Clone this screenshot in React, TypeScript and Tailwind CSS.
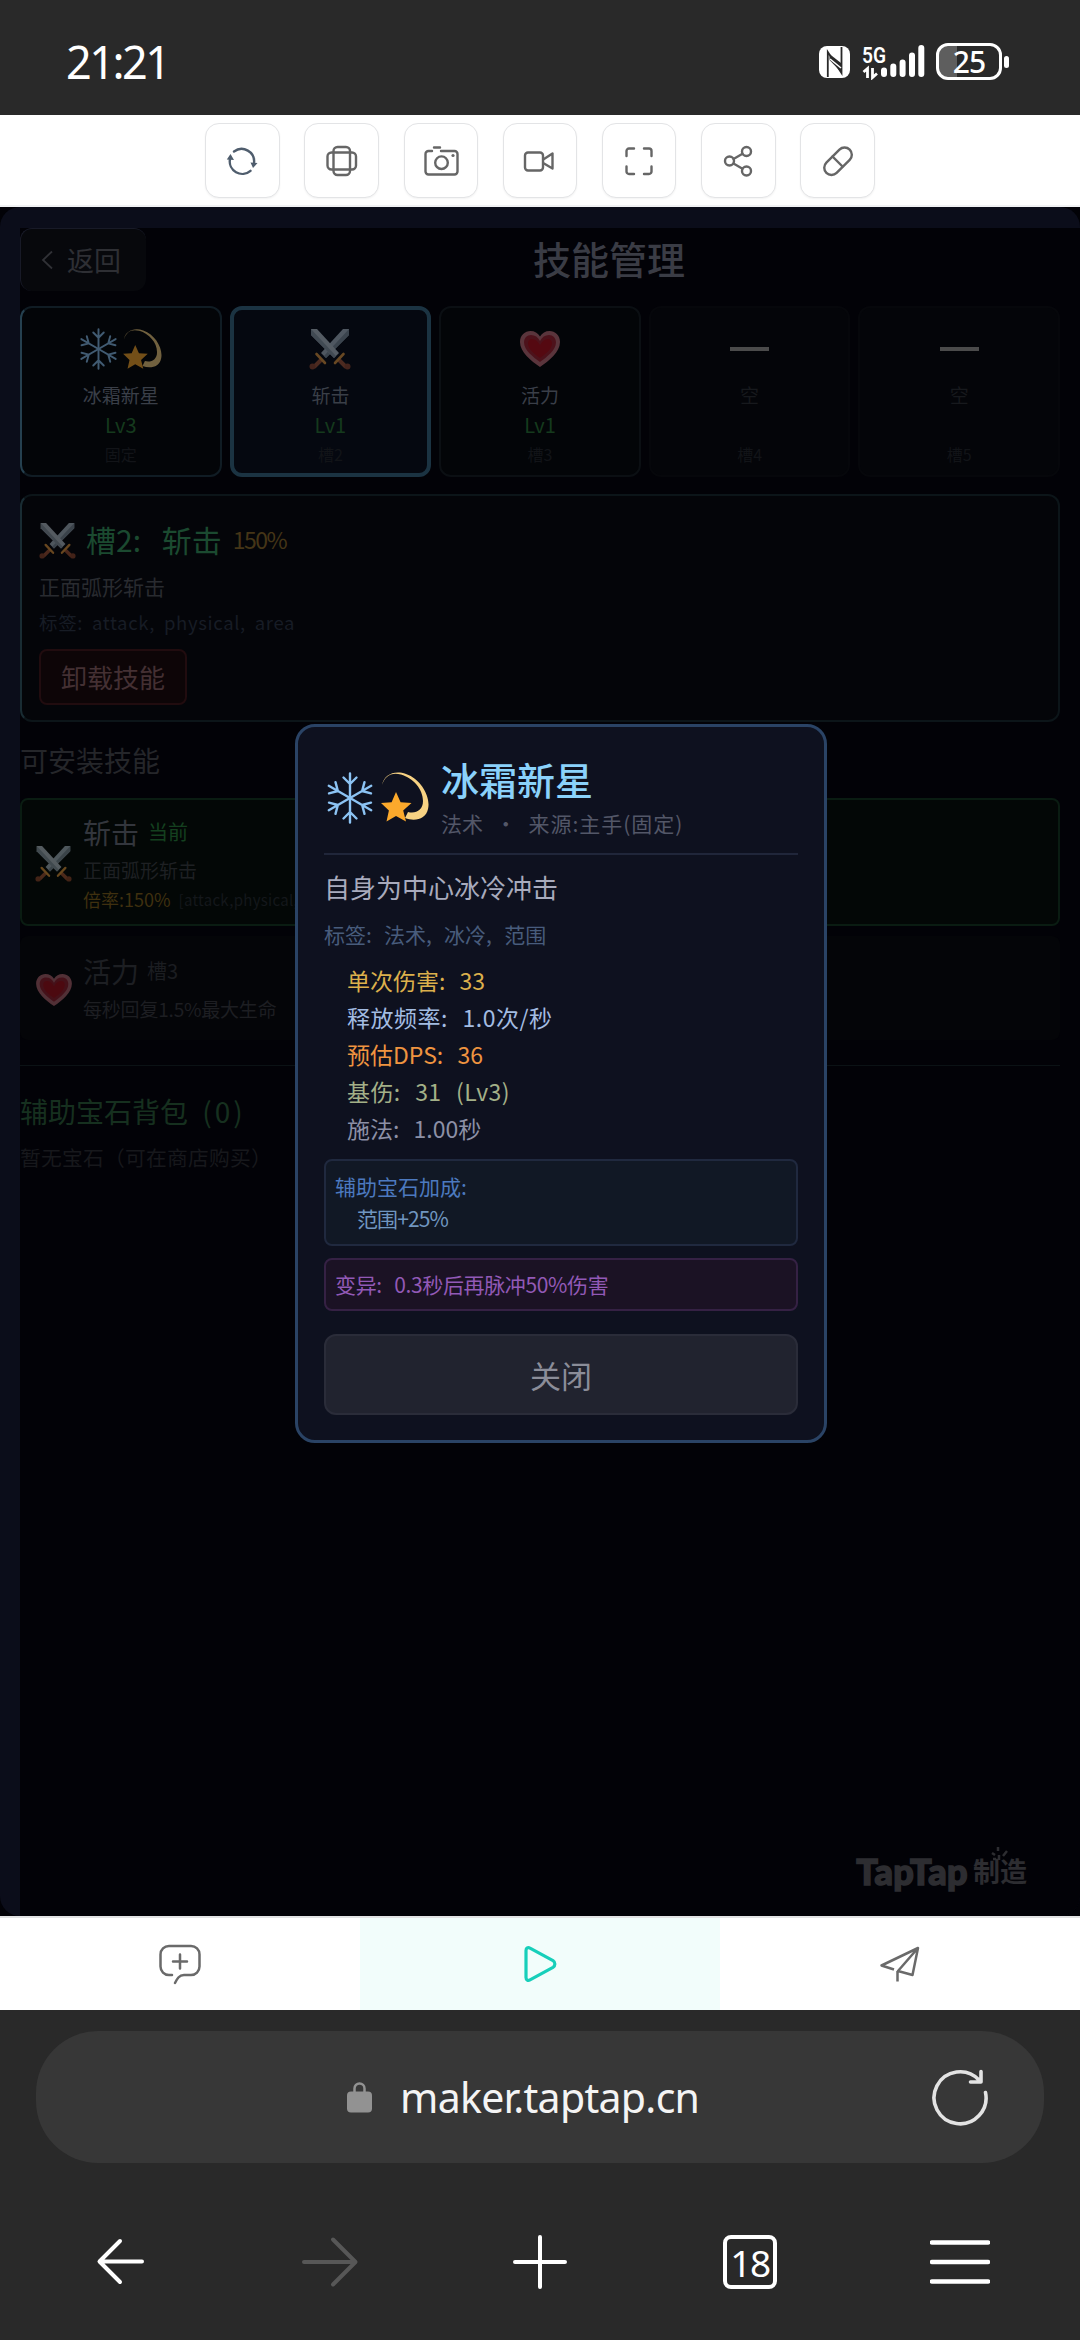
import type { ReactNode } from "react";
import clsx from "clsx";

const STATS = [
  { text: "单次伤害: 33", className: "text-[#dcb04c]" },
  { text: "释放频率: 1.0次/秒", className: "text-[#a3bce2] tracking-[0.500px]" },
  { text: "预估DPS: 36", className: "text-[#ef9440]" },
  { text: "基伤: 31 (Lv3)", className: "text-[#a3b088] tracking-[0.400px]" },
  { text: "施法: 1.00秒", className: "text-[#8c90a6]" },
];

function Snowflake({ className }: { className?: string }) {
  return (
    <svg viewBox="0 0 48 52" className={className} fill="none" stroke="#8cc3f3" strokeWidth="2.4" strokeLinecap="round">
      {[0, 60, 120, 180, 240, 300].map((deg) => (
        <path key={deg} d="M24 26V1.500M24 12l-6.500-6.500M24 12l6.500-6.500" transform={`rotate(${deg} 24 26)`} />
      ))}
    </svg>
  );
}

function Dizzy({ className }: { className?: string }) {
  return (
    <svg viewBox="0 0 48 52" className={className}>
      <path d="M1 14C3 4 13-1 25 3c15 5 25 23 22 35-2 10-13 13-23 9l3-6c8 2 15-2 15-11C42 18 32 7 20 3.500 10 1 4 5 1 14Z" fill="#f7d283" />
      <path d="M15 21l4.600 10.200L30.500 32l-8.300 7.500L25 50.500 15 45l-9.500 5.500 2.400-11L0 32l10.600-.8z" fill="#fba92c" />
    </svg>
  );
}

function Swords({ className }: { className?: string }) {
  return (
    <svg viewBox="0 0 42 42" className={className}>
      <path d="M40 1v6L17 30l-5-5L34 1z" fill="#a9b8c4" />
      <path d="M40 1v6L17 30l-2-2z" fill="#7d8d99" />
      <path d="M2 1v6l23 23 5-5L8 1z" fill="#b6c2cb" />
      <path d="M2 1v6l23 23 2-2z" fill="#8b9aa5" />
      <path d="M13 31l-8 8M29 31l8 8" stroke="#a35434" strokeWidth="4" />
      <path d="M7.500 26l8.500 9M34.500 26L26 35" stroke="#e0963a" strokeWidth="2.600" strokeLinecap="round" />
      <circle cx="3.500" cy="38.500" r="3" fill="#8f452b" />
      <circle cx="38.500" cy="38.500" r="3" fill="#8f452b" />
    </svg>
  );
}

function Heart({ className }: { className?: string }) {
  return (
    <svg viewBox="0 0 42 38" className={className}>
      <path d="M21 37C12 31 1 22 1 12 1 5 6 1 11.500 1c4 0 7.500 2 9.500 5.500C23 3 26.500 1 30.500 1 36 1 41 5 41 12c0 10-11 19-20 25Z" fill="#c4707c" />
      <path d="M21 32C14 27 5 20 5 12.500 5 8 8 5 12 5c4 0 7 2 9 6 2-4 5-6 9-6s7 3 7 7.500C37 20 28 27 21 32Z" fill="#a82334" />
      <path d="M21 28C15 24 9 19 9 13.500 9 10 11 9 13 9c3 0 6 2 8 6 2-4 5-6 8-6 2 0 4 1 4 4.500C33 19 27 24 21 28Z" fill="#b8101c" />
    </svg>
  );
}

function StatusBar() {
  return (
    <header className="flex h-[115px] items-center justify-between bg-[#292929] pt-[8px] pr-[71px] pl-[66px] text-white">
      <span className="font-['Noto_Sans',sans-serif] text-[45px] leading-none tracking-[-2.500px]">21:21</span>
      <div className="flex items-center">
        <svg width="32" height="32" viewBox="0 0 32 32">
          <rect width="31" height="32" rx="8" fill="#fff" />
          <path d="M8.800 31V6L22.500 27V1" fill="none" stroke="#292929" strokeWidth="1.800" />
          <path d="M10.500 8l11.500 9v9L10.500 14z" fill="#292929" />
          <path d="M11 13l11 9" stroke="#fff" strokeWidth="1.600" />
        </svg>
        <svg width="63" height="36" viewBox="0 0 63 36" className="ml-[11px]">
          <text x="0" y="18.500" fill="#fff" fontFamily="Roboto" fontSize="22" fontWeight="600" textLength="24" lengthAdjust="spacingAndGlyphs">5G</text>
          <path d="M5.500 34V24.500L1.500 28M10.500 24v9.500l4.500-4" fill="none" stroke="#fff" strokeWidth="2.800" />
          <path d="M22 26.500v3.500M31.300 22.500v7.500M40.600 18.500v11.500M50 11.500v18.500M59.300 4v26" stroke="#fff" strokeWidth="6" strokeLinecap="round" />
        </svg>
        <div className="ml-[11px] flex h-[37px] w-[66px] items-center justify-center rounded-[12px] border-[3px] border-white bg-linear-to-r from-[#5e5e5e] from-30% to-[#292929] to-30%">
          <span className="font-['Noto_Sans',sans-serif] text-[30px] leading-[31px] font-medium tracking-[-1px]">25</span>
        </div>
        <span className="ml-[2px] h-[12px] w-[5px] rounded-full bg-white" />
      </div>
    </header>
  );
}

const TOOLS: { id: string; icon: ReactNode }[] = [
  {
    id: "refresh",
    icon: (
      <g stroke="#4f5d6d">
        <path d="M10 8.500A12.500 12.500 0 0 1 30 20M26.500 27.800A12.500 12.500 0 0 1 6 16" />
        <path d="M26.500 19.500l7 .500-4.500 5zM2.800 16.500L6.500 11l3.500 6z" fill="#4f5d6d" stroke="none" />
      </g>
    ),
  },
  {
    id: "rotate",
    icon: (
      <>
        <rect x="9.500" y="4" width="16.500" height="28" rx="4" />
        <rect x="3.500" y="9.500" width="28.500" height="17" rx="4" />
      </>
    ),
  },
  {
    id: "camera",
    icon: (
      <>
        <path d="M9 8H5.500A3 3 0 0 0 2.500 11v17.500a3 3 0 0 0 3 3h26a3 3 0 0 0 3-3V11a3 3 0 0 0-3-3H18M11 4.500h6" />
        <circle cx="18.500" cy="19.700" r="6.300" />
        <circle cx="30" cy="12.500" r="1.600" fill="#666" stroke="none" />
      </>
    ),
  },
  {
    id: "video",
    icon: (
      <>
        <rect x="3" y="9.500" width="18" height="18" rx="3" />
        <path d="M22 16l8.500-5.500v15L22 20.500" />
      </>
    ),
  },
  { id: "fullscreen", icon: <path d="M13 5.500H8a2.500 2.500 0 0 0-2.500 2.500v5M23 5.500h5a2.500 2.500 0 0 1 2.500 2.500v5M13 31H8a2.500 2.500 0 0 1-2.500-2.500v-5M23 31h5a2.500 2.500 0 0 0 2.500-2.500v-5" /> },
  {
    id: "share",
    icon: (
      <>
        <circle cx="9.500" cy="18" r="4.500" />
        <circle cx="26.500" cy="8.500" r="4.500" />
        <circle cx="26.500" cy="28" r="4.500" />
        <path d="M13.500 16l9-5.200M13.500 20.500l9 5.200" />
      </>
    ),
  },
  {
    id: "pill",
    icon: (
      <>
        <rect x="1.500" y="11" width="33" height="14.500" rx="7.250" transform="rotate(-45 18 18.200)" />
        <path d="M12.500 13.500l10 10" />
      </>
    ),
  },
];

function Toolbar() {
  return (
    <div className="flex h-[92px] justify-center gap-[24.8px] border-b-2 border-[#f1f2f4] bg-white pt-[8px]">
      {TOOLS.map((tool) => (
        <button key={tool.id} className="flex h-[75px] w-[74.4px] items-center justify-center rounded-[14px] border border-[#e3e4e6] bg-white shadow-xs">
          <svg width="36" height="36" viewBox="0 0 36 36" fill="none" stroke="#666" strokeWidth="2.400" strokeLinecap="round" strokeLinejoin="round">
            {tool.icon}
          </svg>
        </button>
      ))}
    </div>
  );
}

type Slot = { icon: ReactNode; name: string; level?: string; slot: string; className: string };

const SLOTS: Slot[] = [
  {
    icon: (
      <>
        <Snowflake className="h-[42px] w-[39px]" />
        <Dizzy className="h-[42px] w-[39px]" />
      </>
    ),
    name: "冰霜新星",
    level: "Lv3",
    slot: "固定",
    className: "border-2 border-[#101c24] border-l-[#25404f] bg-[#030508]",
  },
  { icon: <Swords className="h-[42px] w-[42px]" />, name: "斩击", level: "Lv1", slot: "槽2", className: "border-4 border-[#1b3342] bg-[#050810]" },
  { icon: <Heart className="h-[38px] w-[42px]" />, name: "活力", level: "Lv1", slot: "槽3", className: "border-2 border-[#0b0f13] bg-[#030508]" },
  { icon: null, name: "空", slot: "槽4", className: "border-2 border-[#06070b] bg-[#040509]" },
  { icon: null, name: "空", slot: "槽5", className: "border-2 border-[#06070b] bg-[#040509]" },
];

function SkillSlot({ icon, name, level, slot, className }: Slot) {
  return (
    <div className={clsx("flex flex-col items-center rounded-[12px]", className)}>
      <div className={clsx("flex h-[42px] items-center", className.includes("border-4") ? "mt-[18px]" : "mt-[20px]")}>
        {icon ? <div className="flex gap-[5px] opacity-45">{icon}</div> : <span className="h-[4px] w-[39px] bg-[#4b4b4b]" />}
      </div>
      <div className={clsx("mt-[12px] h-[25px] text-[19px] leading-[25px]", icon ? "text-[#3a3f48]" : "text-[#17191d]")}>{name}</div>
      <div className="mt-[3px] h-[30px] text-[20px] leading-[30px] text-[#153a1d]">{level}</div>
      <div className="mt-[2px] h-[24px] text-[16px] leading-[24px] text-[#121418]">{slot}</div>
    </div>
  );
}

function SkillScreen() {
  return (
    <div className="h-full overflow-hidden bg-[#020207] pr-5">
      <div className="flex h-[63px] gap-3">
        <button className="flex w-[126px] items-center rounded-[12px] border-t border-l border-[#181a27] bg-[#07080c] pl-[20px] text-[27px] text-[#2e2f34]">
          <svg width="12" height="20" viewBox="0 0 12 20" fill="none" stroke="#303136" strokeWidth="1.800">
            <path d="M11 1.500L2 10l9 8.500" />
          </svg>
          <span className="ml-[14px]">返回</span>
        </button>
        <h1 className="flex-1 text-center text-[38px] leading-[59px] font-medium text-[#3a3c45]">技能管理</h1>
      </div>

      <div className="mt-[15px] grid h-[171px] grid-cols-5 gap-2">
        {SLOTS.map((slot) => (
          <SkillSlot key={slot.slot} {...slot} />
        ))}
      </div>

      <section className="mt-[17px] h-[228px] rounded-[12px] border-2 border-[#0c1519] border-l-[#192c33] bg-[#040509] pt-[24px] pl-[17px]">
        <div className="flex h-[40px] items-center">
          <Swords className="h-[37px] w-[37px] opacity-45" />
          <span className="-mt-[3px] ml-[10px] text-[30px] leading-[40px] text-[#1b4a30] [word-spacing:14px]">槽2: 斩击</span>
          <span className="-mt-[3px] ml-[11px] text-[23px] leading-[40px] tracking-[-1.500px] text-[#453517]">150%</span>
        </div>
        <p className="mt-[14px] h-[25px] text-[21px] leading-[25px] text-[#292b30]">正面弧形斩击</p>
        <p className="mt-[11px] h-[25px] text-[18.500px] leading-[25px] tracking-[0.650px] text-[#171c25] [word-spacing:4px]">标签: attack, physical, area</p>
        <button className="mt-[14px] h-[56px] w-[148px] rounded-[8px] border-2 border-[#210c0f] bg-[#0d0507] pb-px text-[26px] leading-none text-[#443033]">卸载技能</button>
      </section>

      <h2 className="mt-[18px] h-[40px] text-[28px] leading-[40px] text-[#25262a]">可安装技能</h2>

      <section className="mt-[18px] flex h-[128px] rounded-[8px] border-2 border-[#0a1c12] bg-[#030706] pl-[13px]">
        <Swords className="mt-[45px] h-[37px] w-[37px] opacity-45" />
        <div className="ml-[11px] pt-[15px]">
          <div className="flex h-[35px] gap-[9px] leading-[35px]">
            <span className="text-[28px] text-[#33363d]">斩击</span>
            <span className="text-[20px] leading-[33px] text-[#14401f]">当前</span>
          </div>
          <p className="mt-[4px] h-[31px] text-[19px] leading-[31px] text-[#1e2023]">正面弧形斩击</p>
          <div className="flex h-[29px] leading-[29px]">
            <span className="text-[18px] text-[#3f300f]">倍率:150%</span>
            <span className="ml-[8px] text-[15px] tracking-[0.300px] text-[#14171b]">[attack,physical,area]</span>
          </div>
        </div>
      </section>

      <section className="mt-[10px] flex h-[104px] rounded-[8px] bg-[#040508] pl-[15px]">
        <Heart className="mt-[37px] h-[34px] w-[38px] opacity-40" />
        <div className="ml-[10px] pt-[18px]">
          <div className="flex h-[35px] gap-[8px] leading-[35px]">
            <span className="text-[28px] text-[#1d1f23]">活力</span>
            <span className="text-[20px] leading-[33px] text-[#1b1d21]">槽3</span>
          </div>
          <p className="mt-[5px] h-[30px] text-[19px] leading-[30px] tracking-[-0.200px] text-[#1d1e22]">每秒回复1.5%最大生命</p>
        </div>
      </section>

      <div className="mt-[25px] h-px bg-[#0b1215]" />
      <h2 className="mt-[25px] h-[40px] text-[28px] leading-[40px] text-[#16301f] [word-spacing:8px]">
        辅助宝石背包 <span className="tracking-[3px]">(0)</span>
      </h2>
      <p className="mt-[11px] h-[30px] text-[20.800px] leading-[30px] tracking-[0.200px] text-[#17181c]">暂无宝石（可在商店购买）</p>
    </div>
  );
}

function SkillDialog() {
  return (
    <div className="absolute top-[517px] left-[295px] h-[719px] w-[532px] rounded-[20px] border-[3px] border-[#2a4365] bg-[#0e111f] px-[26px] pt-[24px]">
      <div className="flex h-[104px] items-start border-b-2 border-[#20263a]">
        <Snowflake className="mt-[21px] ml-[2px] h-[52px] w-[48px]" />
        <Dizzy className="mt-[20px] ml-[7px] h-[52px] w-[48px]" />
        <div className="ml-[12px]">
          <h2 className="h-[56px] text-[38px] leading-[56px] font-medium text-[#8ad2fb]">冰霜新星</h2>
          <p className="h-[33px] text-[21px] leading-[33px] whitespace-pre text-[#535768] [word-spacing:7.500px]">
            法术 · <span className="tracking-[1px]">来源:主手(固定)</span>
          </p>
        </div>
      </div>
      <p className="mt-[14px] h-[36px] text-[26px] leading-[36px] text-[#a8abbd]">自身为中心冰冷冲击</p>
      <p className="mt-[15px] h-[30px] text-[21px] leading-[28px] text-[#485c7c] [word-spacing:7.500px]">标签: 法术, 冰冷, 范围</p>
      <div className="mt-[12px] pl-[23px] text-[23px] [word-spacing:9px]">
        {STATS.map((stat) => (
          <p key={stat.text} className={clsx("h-[37px] leading-[37px]", stat.className)}>
            {stat.text}
          </p>
        ))}
      </div>
      <div className="mt-[12px] h-[87px] rounded-[8px] border-2 border-[#20293f] bg-[#111825] pt-[9px] pl-[9px] text-[21px] leading-[32px]">
        <p className="text-[#4c79bf]">辅助宝石加成:</p>
        <p className="pl-[22px] tracking-[-0.900px] text-[#7096c0]">范围+25%</p>
      </div>
      <div className="mt-[12px] h-[53px] rounded-[8px] border-2 border-[#352144] bg-[#1b1224] pl-[9px] text-[21px] leading-[48px] tracking-[-0.350px] text-[#9259b6] [word-spacing:8px]">
        变异: 0.3秒后再脉冲50%伤害
      </div>
      <button className="mt-[23px] block h-[81px] w-full rounded-[12px] border-2 border-[#2a2c39] bg-[#21232f] pb-px text-[31px] leading-none text-[#8b8d99]">关闭</button>
    </div>
  );
}

function Watermark() {
  return (
    <div className="absolute right-[53px] bottom-[25px] flex items-center text-[#2d2d31]">
      <span className="font-['Lato',sans-serif] text-[36px] leading-[40px] font-black tracking-[0.400px] [-webkit-text-stroke:1.5px_#2d2d31]">TapTap</span>
      <span className="ml-[5px] text-[27px] leading-[40px] font-bold">制造</span>
      <svg width="20" height="16" viewBox="0 0 20 16" className="absolute -top-[5px] right-[17px]" fill="none" stroke="#2d2d31" strokeWidth="2.500">
        <path d="M8 1v4M17 5l-4 5M2 7l3 2M9 9v5M3 13h3" />
      </svg>
    </div>
  );
}

function BottomTabs() {
  return (
    <nav className="grid h-[94px] grid-cols-3 border-t-2 border-[#e2e3e4] bg-white">
      <div className="flex items-center justify-center">
        <svg width="44" height="42" viewBox="0 0 44 42" fill="none" stroke="#6a6a6a" strokeWidth="2.500" strokeLinecap="round" strokeLinejoin="round">
          <path d="M14 32h-3a8.500 8.500 0 0 1-8.500-8.500v-12A8.500 8.500 0 0 1 11 3h22a8.500 8.500 0 0 1 8.500 8.500v12A8.500 8.500 0 0 1 33 32h-7c-5 0-7 4-9 8M22 11.500v14M15 18.500h14" />
        </svg>
      </div>
      <div className="flex items-center justify-center bg-[#f2fdfb]">
        <svg width="36" height="40" viewBox="0 0 36 40" fill="none" stroke="#17cfba" strokeWidth="3.200" strokeLinejoin="round">
          <path d="M4 6.500v27c0 2.500 2 3.500 4 2.300l23-12.500c2.500-1.500 2.500-5 0-6.600L8 4.200C6 3 4 4 4 6.500Z" />
        </svg>
      </div>
      <div className="flex items-center justify-center">
        <svg width="42" height="40" viewBox="0 0 42 40" fill="none" stroke="#6a6a6a" strokeWidth="2.500" strokeLinejoin="round">
          <path d="M15 25.500L2.500 21.500 39 4l-5.500 27L19 27 39 4M18.500 27v10.500" />
        </svg>
      </div>
    </nav>
  );
}

function BrowserBar() {
  return (
    <footer className="h-[330px] bg-[#292929] pt-[21px]">
      <div className="mx-[36px] flex h-[132px] items-center rounded-[62px] bg-[#373737] pr-[55px] pl-[311px]">
        <svg width="26" height="31" viewBox="0 0 26 31">
          <rect y="9.500" width="25" height="21" rx="4" fill="#929292" />
          <path d="M7.500 11V6.500a5 5 0 0 1 10 0V11" fill="none" stroke="#929292" strokeWidth="2.500" />
        </svg>
        <span className="ml-[27px] font-['Noto_Sans',sans-serif] text-[41px] leading-none tracking-[-0.700px] text-[#f4f4f4]">maker.taptap.cn</span>
        <svg width="58" height="58" viewBox="0 0 58 58" className="ml-auto" fill="none" stroke="#e3e3e3" strokeWidth="3.600" strokeLinecap="round" strokeLinejoin="round">
          <path d="M54.500 24.500A26 26 0 1 1 48 12M39.500 14H50V3.500" />
        </svg>
      </div>
      <div className="mt-[65px] flex h-[68px] items-center justify-between px-[90px] text-white">
        <svg width="60" height="60" viewBox="0 0 60 60" fill="none" stroke="#fff" strokeWidth="4" strokeLinecap="round" strokeLinejoin="round">
          <path d="M52 29.500H10M30 9L9.500 29.500 30 50" />
        </svg>
        <svg width="60" height="60" viewBox="0 0 60 60" fill="none" stroke="#575757" strokeWidth="4" strokeLinecap="round" strokeLinejoin="round">
          <path d="M4 30h51M33 7.500L55.500 30 33 52.500" />
        </svg>
        <svg width="60" height="60" viewBox="0 0 60 60" fill="none" stroke="#fff" strokeWidth="4" strokeLinecap="round">
          <path d="M5 30h50M30 5v50" />
        </svg>
        <div className="mx-[3px] flex h-[54px] w-[54px] items-center justify-center rounded-[8px] border-4 border-white font-['Noto_Sans',sans-serif] text-[37px] leading-none tracking-[-1.500px]">18</div>
        <svg width="60" height="60" viewBox="0 0 60 60" fill="none" stroke="#fff" strokeWidth="4.400" strokeLinecap="round">
          <path d="M2 10.500h56M2 30h56M2 49.500h56" />
        </svg>
      </div>
    </footer>
  );
}

export default function App() {
  return (
    <div className="h-[2340px] w-[1080px] overflow-hidden bg-[#292929] font-['Noto_Sans_CJK_SC',sans-serif]">
      <StatusBar />
      <Toolbar />
      <main className="relative h-[1709px] bg-[#020207]">
        <div className="h-full overflow-hidden rounded-[20px] bg-[#0b0d1a] pt-[21px] pl-5">
          <SkillScreen />
        </div>
        <SkillDialog />
        <Watermark />
      </main>
      <BottomTabs />
      <BrowserBar />
    </div>
  );
}
